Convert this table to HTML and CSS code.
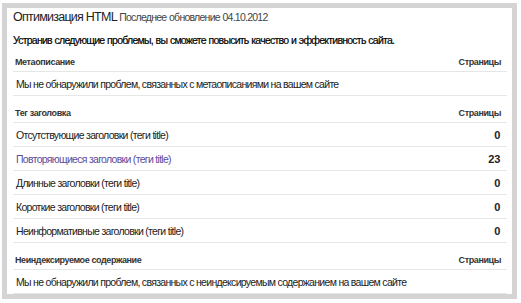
FILE: index.html
```html
<!DOCTYPE html>
<html>
  <head>
    <meta charset="utf-8" />
    <title>Оптимизация HTML</title>
    <link rel="stylesheet" href="styles.css">
  </head>
  <body>
    <div class="frame">
      <div class="panel">
        <h1>Оптимизация HTML <span class="updated">Последнее обновление 04.10.2012</span></h1>
        <p class="lead">Устранив следующие проблемы, вы сможете повысить качество и эффективность сайта.</p>

        <table class="report">
          <tr class="head">
            <th>Метаописание</th>
            <th class="num">Страницы</th>
          </tr>
          <tr>
            <td colspan="2">Мы не обнаружили проблем, связанных с метаописаниями на вашем сайте</td>
          </tr>
        </table>

        <table class="report">
          <tr class="head">
            <th>Тег заголовка</th>
            <th class="num">Страницы</th>
          </tr>
          <tr>
            <td>Отсутствующие заголовки (теги title)</td>
            <td class="num">0</td>
          </tr>
          <tr>
            <td><a href="#">Повторяющиеся заголовки (теги title)</a></td>
            <td class="num">23</td>
          </tr>
          <tr>
            <td>Длинные заголовки (теги title)</td>
            <td class="num">0</td>
          </tr>
          <tr>
            <td>Короткие заголовки (теги title)</td>
            <td class="num">0</td>
          </tr>
          <tr>
            <td>Неинформативные заголовки (теги title)</td>
            <td class="num">0</td>
          </tr>
        </table>

        <table class="report">
          <tr class="head">
            <th>Неиндексируемое содержание</th>
            <th class="num">Страницы</th>
          </tr>
          <tr>
            <td colspan="2">Мы не обнаружили проблем, связанных с неиндексируемым содержанием на вашем сайте</td>
          </tr>
        </table>
      </div>
    </div>
  </body>
</html>
```

FILE: styles.css
```css
body {
  margin: 0;
  background-color: white;
  font-family: "Liberation Sans", Arial, sans-serif;
  color: #222;
}
.frame {
  margin: 3px 4px 4px 2px;
  border: 5px solid #d4d4d4;
}
.panel {
  padding: 0 5px 0 6px;
}
h1 {
  font-size: 12.5px;
  font-weight: normal;
  letter-spacing: -0.75px;
  margin: 0;
  line-height: 18px;
}
.updated {
  font-size: 10.5px;
  color: #444;
  letter-spacing: -0.75px;
  word-spacing: 0.5px;
}
.lead {
  font-size: 10.5px;
  color: #000;
  letter-spacing: -0.75px;
  word-spacing: 0.5px;
  -webkit-text-stroke: 0.2px #000;
  margin: 7px 0 0;
  line-height: 14px;
  white-space: nowrap;
}
.report {
  width: 100%;
  border-collapse: collapse;
  margin-top: 5px;
}
.report + .report {
  margin-top: 7px;
}
.report th {
  font-size: 9px;
  font-weight: bold;
  letter-spacing: -0.4px;
  color: #333;
  text-align: left;
  height: 19px;
  padding: 0 6px 0 2px;
  border-bottom: 1px solid #e6e6e6;
}
.report td {
  font-size: 10.5px;
  letter-spacing: -0.7px;
  height: 23px;
  padding: 0 6px 0 3px;
  border-bottom: 1px solid #e6e6e6;
}
.report .num {
  text-align: right;
}
.report td.num {
  font-size: 11px;
  font-weight: bold;
  letter-spacing: -0.3px;
  padding-right: 7px;
}
a {
  color: #5b4c9c;
  text-decoration: none;
}
```
